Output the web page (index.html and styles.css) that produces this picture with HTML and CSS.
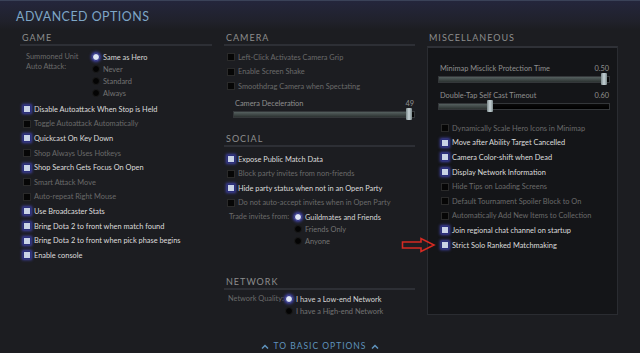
FILE: index.html
```html
<!DOCTYPE html>
<html lang="en">
<head>
    <meta charset="UTF-8">
    <title>Advanced Options</title>
    <link rel="stylesheet" href="styles.css">
</head>
<body>

<div class="page">
    <div class="top-bar">
        <h1 class="title">ADVANCED OPTIONS</h1>
    </div>

    <div class="columns">
        <!-- Game -->
        <div class="col">
            <h2 class="section-title">GAME</h2>
            <div class="radio-group game-radios">
                <div class="radio-label">Summoned Unit<br>Auto Attack:</div>
                <div class="radio-list">
                    <div class="radio on">Same as Hero</div>
                    <div class="radio">Never</div>
                    <div class="radio">Standard</div>
                    <div class="radio">Always</div>
                </div>
            </div>
            <div class="checks game-checks">
                <div class="check on">Disable Autoattack When Stop is Held</div>
                <div class="check">Toggle Autoattack Automatically</div>
                <div class="check on">Quickcast On Key Down</div>
                <div class="check">Shop Always Uses Hotkeys</div>
                <div class="check on">Shop Search Gets Focus On Open</div>
                <div class="check">Smart Attack Move</div>
                <div class="check">Auto-repeat Right Mouse</div>
                <div class="check on">Use Broadcaster Stats</div>
                <div class="check on">Bring Dota 2 to front when match found</div>
                <div class="check on">Bring Dota 2 to front when pick phase begins</div>
                <div class="check on">Enable console</div>
            </div>
        </div>

        <!-- Camera / Social / Network -->
        <div class="col">
            <h2 class="section-title">CAMERA</h2>
            <div class="checks camera-checks">
                <div class="check">Left-Click Activates Camera Grip</div>
                <div class="check">Enable Screen Shake</div>
                <div class="check">Smoothdrag Camera when Spectating</div>
            </div>
            <div class="slider camera-slider">
                <div class="slider-head"><span>Camera Deceleration</span><span>49</span></div>
                <div class="track"><div class="fill" style="width: 97%"></div><div class="knob" style="left: 97%"></div></div>
            </div>

            <h2 class="section-title social-title">SOCIAL</h2>
            <div class="checks social-checks">
                <div class="check on">Expose Public Match Data</div>
                <div class="check">Block party invites from non-friends</div>
                <div class="check on">Hide party status when not in an Open Party</div>
                <div class="check">Do not auto-accept invites when in Open Party</div>
            </div>
            <div class="radio-group trade-radios">
                <div class="radio-label">Trade invites from:</div>
                <div class="radio-list">
                    <div class="radio on">Guildmates and Friends</div>
                    <div class="radio">Friends Only</div>
                    <div class="radio">Anyone</div>
                </div>
            </div>

            <h2 class="section-title network-title">NETWORK</h2>
            <div class="radio-group net-radios">
                <div class="radio-label">Network Quality:</div>
                <div class="radio-list">
                    <div class="radio on">I have a Low-end Network</div>
                    <div class="radio">I have a High-end Network</div>
                </div>
            </div>
        </div>

        <!-- Misc -->
        <div class="col">
            <h2 class="section-title misc-title">MISCELLANEOUS</h2>
            <div class="misc-panel">
                <div class="slider">
                    <div class="slider-head"><span>Minimap Misclick Protection Time</span><span>0.50</span></div>
                    <div class="track"><div class="fill" style="width: 97%"></div><div class="knob" style="left: 97%"></div></div>
                </div>
                <div class="slider">
                    <div class="slider-head"><span>Double-Tap Self Cast Timeout</span><span>0.60</span></div>
                    <div class="track"><div class="fill" style="width: 30%"></div><div class="knob" style="left: 30%"></div></div>
                </div>
                <div class="checks misc-checks">
                    <div class="check">Dynamically Scale Hero Icons in Minimap</div>
                    <div class="check on">Move after Ability Target Cancelled</div>
                    <div class="check on">Camera Color-shift when Dead</div>
                    <div class="check on">Display Network Information</div>
                    <div class="check">Hide Tips on Loading Screens</div>
                    <div class="check">Default Tournament Spoiler Block to On</div>
                    <div class="check">Automatically Add New Items to Collection</div>
                    <div class="check on">Join regional chat channel on startup</div>
                    <div class="check on">Strict Solo Ranked Matchmaking
                        <svg class="red-arrow" width="35" height="16" viewBox="0 0 35 16">
                            <path d="M1.5 5 H20 V1.5 L33 8 L20 14.5 V11 H1.5 Z" fill="none" stroke="#d42a22" stroke-width="1.6" stroke-linejoin="miter"/>
                        </svg>
                    </div>
                </div>
            </div>
        </div>
    </div>

    <div class="bottom-link">
        <svg class="chev" width="8" height="5" viewBox="0 0 8 5"><path d="M1 4.5 L4 1.5 L7 4.5" fill="none" stroke="#5f93bd" stroke-width="1.5"/></svg>
        <span>TO BASIC OPTIONS</span>
        <svg class="chev" width="8" height="5" viewBox="0 0 8 5"><path d="M1 4.5 L4 1.5 L7 4.5" fill="none" stroke="#5f93bd" stroke-width="1.5"/></svg>
    </div>
</div>

</body>
</html>
```

FILE: styles.css
```css
/* Advanced options screen */
body {
    margin: 0;
    background-color: #1c1d21;
    font-family: "Lato", "Open Sans", sans-serif;
    color: #6f6f6f;
}
.page {
    width: 640px;
    height: 353px;
    overflow: hidden;
}
.top-bar {
    height: 30px;
    border-top: 1px solid #3a4258;
    background: linear-gradient(to bottom, #24263c, #20212b 70%, #1c1d21);
    box-sizing: border-box;
}
.title {
    margin: 0;
    padding: 9px 0 0 16px;
    font-size: 12.4px;
    font-weight: normal;
    letter-spacing: 0.5px;
    color: #7ea6c6;
    line-height: 14px;
}
.columns {
    display: grid;
    grid-template-columns: 192px 191px 191px;
    column-gap: 12px;
    padding-left: 20px;
}
.col {
    display: flex;
    flex-direction: column;
}
.section-title {
    margin: 0;
    padding: 0 0 2px 2px;
    height: 14px;
    box-sizing: border-box;
    font-size: 9px;
    line-height: 12px;
    font-weight: normal;
    letter-spacing: 1px;
    color: #8d8d8d;
    border-bottom: 2px solid #2d2f35;
    margin-top: 2px;
}
.misc-title {
    border-bottom: none;
}

/* checkboxes */
.checks {
    display: flex;
    flex-direction: column;
}
.check {
    position: relative;
    height: 14.6px;
    display: flex;
    align-items: center;
    font-size: 7.4px;
    white-space: nowrap;
    color: #6a6a6a;
    padding-left: 3px;
}
.check::before {
    content: "";
    width: 6px;
    height: 6px;
    margin-right: 3px;
    background-color: #060606;
    border: 1px solid #2a2a2a;
    flex-shrink: 0;
}
.check.on {
    color: #dcdcdc;
}
.check.on::before {
    background-color: #c9d3e6;
    border: 1px solid #2b2f7a;
    box-shadow: 0 0 3px 1px #4244a8;
}
.game-checks {
    margin-top: 3px;
}
.camera-checks {
    margin-top: 4px;
}
.social-checks {
    margin-top: 5px;
}

/* radios */
.radio-group {
    display: flex;
    font-size: 7.4px;
}
.radio-label {
    color: #6a6a6a;
    line-height: 10px;
}
.radio-list {
    display: flex;
    flex-direction: column;
}
.radio {
    height: 12px;
    display: flex;
    align-items: center;
    white-space: nowrap;
    color: #737373;
}
.radio::before {
    content: "";
    width: 6px;
    height: 6px;
    margin-right: 3px;
    border-radius: 50%;
    background-color: #040404;
    border: 1px solid #1a1a1a;
    flex-shrink: 0;
}
.radio.on {
    color: #d6d6d6;
}
.radio.on::before {
    background-color: #dfe6f4;
    border: 1px solid #2c2f82;
    box-shadow: 0 0 3px 1px #4547b0;
}
.game-radios {
    margin-top: 5px;
    padding-left: 6px;
}
.game-radios .radio-label {
    width: 66px;
    padding-top: 1px;
}
.trade-radios {
    margin-top: 1px;
    padding-left: 5px;
}
.trade-radios .radio-label {
    width: 65px;
    padding-top: 1px;
}
.net-radios {
    margin-top: 3px;
    padding-left: 4px;
}
.net-radios .radio-label {
    width: 57px;
    padding-top: 1px;
}
.social-title {
    margin-top: 15px;
}
.network-title {
    margin-top: 29px;
}

/* sliders */
.slider {
    display: flex;
    flex-direction: column;
}
.slider-head {
    display: flex;
    justify-content: space-between;
    font-size: 7.4px;
    color: #8f8f8f;
    height: 10px;
    line-height: 10px;
    padding: 0 1px 0 2px;
}
.track {
    position: relative;
    height: 5px;
    margin-top: 2px;
    background: linear-gradient(to bottom, #0a0a0a, #000);
    border: 1px solid #34373a;
}
.fill {
    height: 100%;
    background: linear-gradient(to bottom, #55605f, #2c3231);
}
.knob {
    position: absolute;
    top: -4px;
    width: 6px;
    height: 12px;
    border-radius: 1px;
    background: linear-gradient(to right, #7d8a8c, #c6d2d6, #7d8a8c);
    transform: translateX(-3px);
}
.camera-slider {
    margin-top: 5px;
    padding-left: 9px;
}

/* misc panel */
.misc-panel {
    height: 269px;
    box-sizing: border-box;
    background-color: #141518;
    border: 1px solid #2a2c31;
    border-top: 2px solid #2f3137;
    padding: 16px 7px 0 10px;
    display: flex;
    flex-direction: column;
}
.misc-panel .slider + .slider {
    margin-top: 8px;
}
.misc-checks {
    margin-top: 11px;
}
.red-arrow {
    position: absolute;
    left: -37px;
    top: -1px;
}

/* bottom */
.bottom-link {
    display: flex;
    justify-content: center;
    align-items: center;
    gap: 5px;
    margin-top: 24px;
    font-size: 8.5px;
    letter-spacing: 1px;
    color: #5f93bd;
}
```
